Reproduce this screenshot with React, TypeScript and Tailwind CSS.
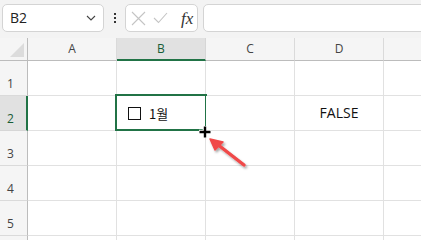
import React from 'react';

const font = { fontFamily: '"Open Sans", "Noto Sans", "Noto Sans CJK KR", sans-serif' };

const cols = ['A', 'B', 'C', 'D'];
const rows = [1, 2, 3, 4, 5, 6];

function TopBar() {
  return (
    <div className="flex items-start h-[38px] bg-[#f3f3f3] pt-[4px] pl-[2px] overflow-hidden">
      {/* name box */}
      <div className="w-[102px] h-[28px] shrink-0 bg-white border border-[#d4d4d4] rounded-[5px] flex items-center pl-[7px] pr-[6px]">
        <span className="text-[14px] text-[#222] flex-1 leading-none">B2</span>
        <svg width="10" height="6" viewBox="0 0 10 6" className="mr-[1px]">
          <path d="M1 1 L5 5 L9 1" stroke="#444" strokeWidth="1.1" fill="none" />
        </svg>
      </div>
      {/* dots */}
      <div className="w-[21px] h-[28px] shrink-0 flex flex-col items-center justify-center gap-[2px]">
        <div className="w-[2px] h-[2px] bg-[#333]" />
        <div className="w-[2px] h-[2px] bg-[#333]" />
        <div className="w-[2px] h-[2px] bg-[#333]" />
      </div>
      {/* cancel/enter/fx */}
      <div className="w-[73px] h-[28px] shrink-0 bg-white border border-[#d4d4d4] rounded-[5px] flex items-center pl-[5px] gap-[7px]">
        <svg width="15" height="15" viewBox="0 0 15 15">
          <path d="M1 1 L14 14 M14 1 L1 14" stroke="#c4c4c4" strokeWidth="1.1" fill="none" />
        </svg>
        <svg width="15" height="12" viewBox="0 0 15 12">
          <path d="M1 6 L5.5 10.5 L14 1" stroke="#c4c4c4" strokeWidth="1.1" fill="none" />
        </svg>
        <span className="ml-[6px] text-[17px] italic text-[#333] leading-none" style={{ fontFamily: '"Liberation Serif", serif' }}>
          fx
        </span>
      </div>
      {/* formula input */}
      <div className="ml-[5px] w-[260px] h-[28px] shrink-0 bg-white border border-[#d4d4d4] rounded-[5px]" />
    </div>
  );
}

function Grid() {
  return (
    <div className="grid grid-cols-[28px_89px_89px_89px_89px_1fr] grid-rows-[23px_35px_35px_35px_35px_35px_35px]">
      {/* corner */}
      <div className="relative bg-[#f5f5f5] border-r border-b border-[#bcbcbc]">
        <svg width="14" height="14" viewBox="0 0 14 14" className="absolute right-[3px] bottom-[3px]">
          <path d="M14 0 L14 14 L0 14 Z" fill="#dcdcdc" />
        </svg>
      </div>
      {cols.map((c) =>
        c === 'B' ? (
          <div key={c} className="bg-[#e1e1e1] border-r border-[#d6d6d6] border-b-2 border-b-[#217346] flex items-center justify-center text-[12px] text-[#185c37] pt-[1px]">
            {c}
          </div>
        ) : (
          <div key={c} className="bg-[#f5f5f5] border-r border-[#dadada] border-b border-b-[#bcbcbc] flex items-center justify-center text-[12px] text-[#444]">
            {c}
          </div>
        )
      )}
      <div className="bg-[#f5f5f5] border-b border-[#bcbcbc]" />

      {rows.map((r) => (
        <React.Fragment key={r}>
          {r === 2 ? (
            <div className="bg-[#e1e1e1] border-r-2 border-r-[#217346] border-b border-[#d6d6d6] flex items-end pl-[7px] pb-[5px] text-[12px] text-[#185c37] leading-none">
              {r}
            </div>
          ) : (
            <div className="bg-[#f5f5f5] border-r border-r-[#bcbcbc] border-b border-[#dadada] flex items-end pl-[7px] pb-[5px] text-[12px] text-[#444] leading-none">
              {r < 6 ? r : null}
            </div>
          )}
          {cols.map((c) => (
            <div key={c} className="relative bg-white border-r border-b border-[#e1e1e1] flex items-center">
              {r === 2 && c === 'B' && (
                <>
                  <div className="flex items-center pl-[11px] gap-[8px]" style={{ fontFamily: '"Noto Sans CJK KR", "Noto Sans", sans-serif' }}>
                    <div className="w-[13px] h-[13px] border border-[#111] bg-white" />
                    <span className="text-[13px] text-[#111] leading-none">1월</span>
                  </div>
                  <div className="absolute -left-[2px] -top-[2px] w-[92px] h-[37px] border-2 border-[#217346] pointer-events-none" />
                </>
              )}
              {r === 2 && c === 'D' && (
                <span className="w-full text-center text-[14px] text-[#111] leading-none">FALSE</span>
              )}
            </div>
          ))}
          <div className="bg-white border-b border-[#e1e1e1]" />
        </React.Fragment>
      ))}
    </div>
  );
}

export default function App() {
  return (
    <div className="relative w-[421px] h-[240px] overflow-hidden bg-white" style={font}>
      <TopBar />
      <Grid />
      {/* fill cursor */}
      <svg width="14" height="14" viewBox="0 0 14 14" className="absolute left-[198px] top-[125px]">
        <path d="M7 1 V13 M1 7 H13" stroke="#fff" strokeWidth="4.5" />
        <path d="M7 1.5 V12.5 M1.5 7 H12.5" stroke="#000" strokeWidth="2.4" />
      </svg>
      {/* red arrow */}
      <svg width="50" height="40" viewBox="0 0 50 40" className="absolute left-[205px] top-[134px]">
        <defs>
          <filter id="sh" x="-20%" y="-20%" width="150%" height="150%">
            <feDropShadow dx="1.5" dy="2" stdDeviation="1.2" floodColor="#000" floodOpacity="0.35" />
          </filter>
        </defs>
        <g filter="url(#sh)">
          <path d="M39 31 L12 10" stroke="#f04848" strokeWidth="3.4" strokeLinecap="round" />
          <path d="M5 5 L18 8 L10 16 Z" fill="#f04848" stroke="#f04848" strokeWidth="1.5" strokeLinejoin="round" />
        </g>
      </svg>
    </div>
  );
}
